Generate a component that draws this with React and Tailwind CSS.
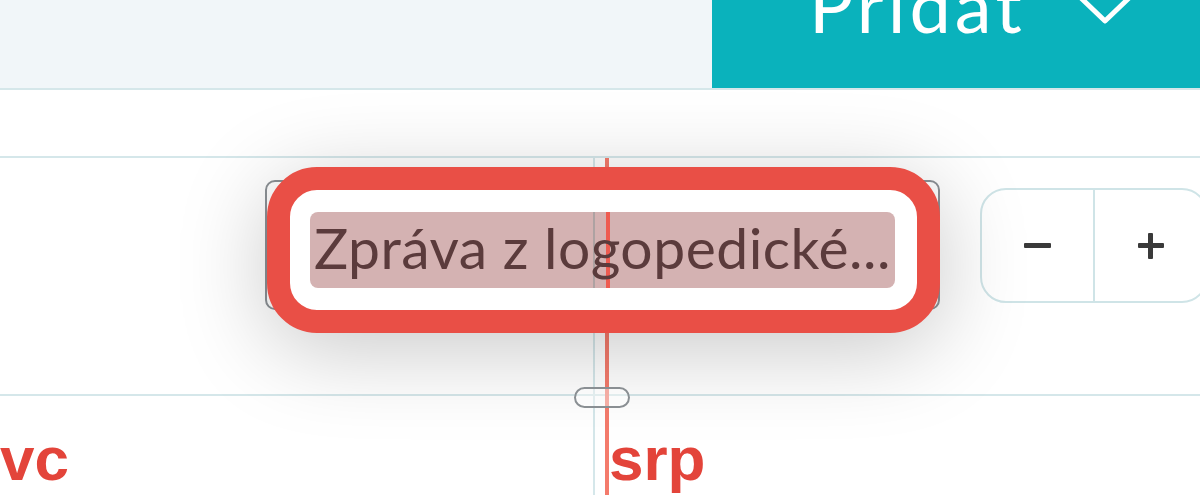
import React from "react";

export default function App() {
  return (
    <div className="relative w-[1200px] h-[495px] overflow-hidden bg-white flex flex-col font-['Lato','Noto_Sans',sans-serif]">
      {/* top bar */}
      <div className="flex h-[88px] shrink-0">
        <div className="flex-1 bg-[#f1f6f9]" />
        <div className="w-[488px] bg-[#0ab2bc] flex items-start pl-[97px] text-white">
          <span className="text-[74px] leading-none -mt-[32px] tracking-[4px] font-normal">Přidat</span>
          <svg className="ml-[52px] -mt-[3px]" width="56" height="32" viewBox="0 0 56 32" fill="none">
            <polyline points="4,2 27,24 50,2" stroke="white" strokeWidth="5" strokeLinecap="round" strokeLinejoin="round" />
          </svg>
        </div>
      </div>
      <div className="h-[2px] bg-[#d5e7ea] shrink-0" />
      <div className="h-[66px] bg-white shrink-0" />
      <div className="h-[2px] bg-[#d5e7ea] shrink-0" />
      {/* main row */}
      <div className="grid grid-cols-[593px_1fr] h-[236px] shrink-0">
        <div className="bg-white" />
        <div className="border-l-2 border-[#d5e7ea] bg-white flex justify-end items-start pt-[30px] -mr-[8px]">
          <div className="flex w-[228px] h-[115px] rounded-[26px] border-2 border-[#cfe4e7] bg-white overflow-hidden">
            <div className="flex-1 flex items-center justify-center border-r-2 border-[#cfe4e7]">
              <div className="w-[27px] h-[5px] bg-[#3a3a3a] rounded-[1px]" />
            </div>
            <div className="flex-1 flex items-center justify-center">
              <div className="relative w-[26px] h-[26px]">
                <div className="absolute left-0 top-[10.5px] w-[26px] h-[5px] bg-[#3a3a3a] rounded-[1px]" />
                <div className="absolute top-0 left-[10.5px] h-[26px] w-[5px] bg-[#3a3a3a] rounded-[1px]" />
              </div>
            </div>
          </div>
        </div>
      </div>
      <div className="h-[2px] bg-[#d5e7ea] shrink-0" />
      {/* bottom row */}
      <div className="grid grid-cols-[593px_1fr] flex-1">
        <div className="bg-white pt-[32px]">
          <span className="font-['Liberation_Sans',Arial,sans-serif] font-bold text-[62px] leading-none text-[#e3443a]">vc</span>
        </div>
        <div className="border-l-2 border-[#d5e7ea] bg-white pt-[32px] pl-[14px]">
          <span className="font-['Liberation_Sans',Arial,sans-serif] font-bold text-[62px] leading-none text-[#e3443a]">srp</span>
        </div>
      </div>

      {/* current time line */}
      <div className="absolute left-[605px] top-[158px] bottom-0 w-[4px] bg-[#f47b6c]" />

      {/* event chip outline beneath */}
      <div className="absolute left-[265px] top-[180px] w-[675px] h-[130px] rounded-[10px] border-2 border-[#8c9196]" />

      {/* drag popup */}
      <div className="absolute left-[267px] top-[167px] w-[673px] h-[166px] rounded-[50px] border-[23px] border-[#e94f46] bg-white shadow-[0_16px_90px_rgba(0,0,0,0.22)] pt-[22px] pl-[20px]">
        <div className="relative w-[585px] h-[76px] rounded-[8px] bg-[#d4b2b2] overflow-hidden pl-[4px] flex items-center">
          <div className="absolute left-[283px] top-0 bottom-0 w-[2px] bg-[#aea2a2]" />
          <div className="absolute left-[296px] top-0 bottom-0 w-[4px] bg-[#ee5b50]" />
          <span className="relative text-[57px] leading-none tracking-[0.5px] text-[#5b3b3c] whitespace-nowrap -mt-[6px]">Zpráva z logopedické...</span>
        </div>
      </div>

      {/* resize handle */}
      <div className="absolute left-[574px] top-[387px] w-[56px] h-[21px] rounded-full border-2 border-[#8a8f93] bg-white/40" />
    </div>
  );
}
